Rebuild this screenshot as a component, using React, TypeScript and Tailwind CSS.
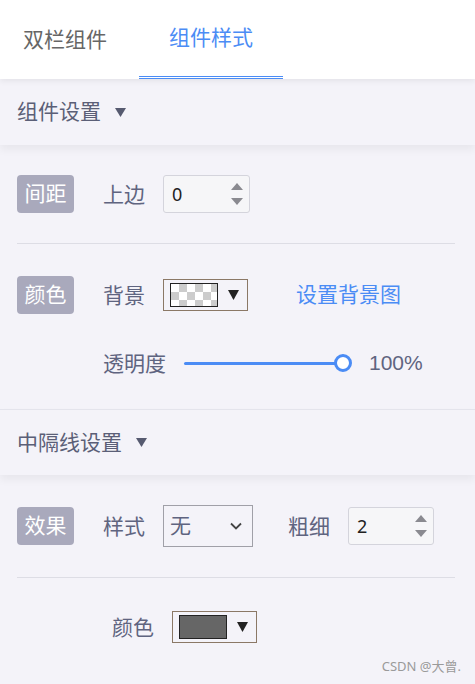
import React from 'react';

const font = "font-['Noto_Sans','Noto_Sans_CJK_SC',sans-serif]";

const Badge = ({ children }: { children: React.ReactNode }) => (
  <div className="flex h-[38px] w-[57px] items-center justify-center rounded-[4px] bg-[#a9a9bc] text-[21px] text-white">
    {children}
  </div>
);

const Label = ({ children, className = '' }: { children: React.ReactNode; className?: string }) => (
  <span className={`text-[21px] leading-none text-[#5f6480] ${className}`}>{children}</span>
);

const NumberInput = ({ value, width }: { value: string; width: string }) => (
  <div className={`flex h-[38px] ${width} items-center justify-between rounded-[3px] border border-[#d4d4dc] bg-[#f6f6f8] pl-[8px] pr-[6px]`}>
    <span className="text-[18px] text-[#222]">{value}</span>
    <div className="flex flex-col items-center gap-[8px]">
      <svg width="12" height="7" viewBox="0 0 12 7">
        <path d="M6 0L12 7H0Z" fill="#8a8a90" />
      </svg>
      <svg width="12" height="7" viewBox="0 0 12 7">
        <path d="M0 0H12L6 7Z" fill="#8a8a90" />
      </svg>
    </div>
  </div>
);

const ColorBox = ({ checker }: { checker?: boolean }) => (
  <div className="flex h-[32px] w-[85px] items-center gap-[10px] border border-[#8b7866] pl-[6px]">
    <div
      className={`h-[24px] w-[48px] border border-[#222] ${
        checker
          ? 'bg-[conic-gradient(#ccc_25%,#fff_0_50%,#ccc_0_75%,#fff_0)] bg-[length:16px_16px]'
          : 'bg-[#666]'
      }`}
    />
    <svg width="11" height="10" viewBox="0 0 11 10">
      <path d="M0 0H11L5.5 10Z" fill="#222" />
    </svg>
  </div>
);

const SectionHeader = ({ title, border }: { title: string; border?: boolean }) => (
  <div
    className={`relative z-10 flex h-[66px] items-center gap-[14px] bg-[#f4f3f9] px-[17px] shadow-[0_5px_8px_rgba(0,0,0,0.05)] ${
      border ? 'border-t border-[#e4e4ec]' : ''
    }`}
  >
    <span className="text-[21px] text-[#5b5f77]">{title}</span>
    <svg width="11" height="9" viewBox="0 0 11 9">
      <path d="M0 0H11L5.5 9Z" fill="#565a70" />
    </svg>
  </div>
);

const App = () => {
  return (
    <div className={`relative min-h-[684px] w-[475px] bg-[#f4f3f9] ${font}`}>
      {/* Tabs */}
      <div className="relative z-20 flex h-[79px] bg-white shadow-[0_2px_6px_rgba(0,0,0,0.07)]">
        <div className="flex w-[139px] items-center pl-[23px] text-[21px] text-[#666]">双栏组件</div>
        <div className="flex w-[144px] items-center justify-center border-b-[3px] border-double border-[#4b8cf5] pb-[1px] text-[21px] text-[#4b8cf5]">
          组件样式
        </div>
      </div>

      <SectionHeader title="组件设置" />

      <div className="px-[17px] pt-[30px] pb-[27px]">
        <div className="flex items-center">
          <Badge>间距</Badge>
          <Label className="ml-[29px]">上边</Label>
          <div className="ml-[18px]">
            <NumberInput value="0" width="w-[87px]" />
          </div>
        </div>

        <div className="mt-[30px] mb-[32px] mr-[3px] h-px bg-[#dddde5]" />

        <div className="flex items-center">
          <Badge>颜色</Badge>
          <Label className="ml-[29px]">背景</Label>
          <div className="ml-[18px]">
            <ColorBox checker />
          </div>
          <span className="ml-[48px] text-[21px] text-[#4b8cf5]">设置背景图</span>
        </div>

        <div className="mt-[30px] flex h-[38px] items-center">
          <Label className="ml-[86px]">透明度</Label>
          <div className="relative ml-[18px] flex h-[20px] w-[168px] items-center">
            <div className="h-[3px] w-[160px] rounded-full bg-[#4b8cf5]" />
            <div className="absolute right-0 h-[18px] w-[18px] rounded-full border-[3px] border-[#4b8cf5] bg-white" />
          </div>
          <span className="ml-[17px] font-['Liberation_Sans',sans-serif] text-[21px] text-[#5f6480]">100%</span>
        </div>
      </div>

      <SectionHeader title="中隔线设置" border />

      <div className="px-[17px] pt-[30px]">
        <div className="flex items-center">
          <Badge>效果</Badge>
          <Label className="ml-[29px]">样式</Label>
          <div className="ml-[18px] flex h-[42px] w-[90px] items-center justify-between border border-[#a0a0a8] pl-[6px] pr-[10px]">
            <span className="text-[21px] text-[#5f6480]">无</span>
            <svg width="12" height="8" viewBox="0 0 12 8">
              <path d="M1 1.5L6 6.5L11 1.5" fill="none" stroke="#444" strokeWidth="1.8" />
            </svg>
          </div>
          <Label className="ml-[35px]">粗细</Label>
          <div className="ml-[18px]">
            <NumberInput value="2" width="w-[86px]" />
          </div>
        </div>

        <div className="mt-[30px] mb-[33px] mr-[3px] h-px bg-[#dddde5]" />

        <div className="flex items-center">
          <Label className="ml-[95px]">颜色</Label>
          <div className="ml-[18px]">
            <ColorBox />
          </div>
        </div>

        <div className="-mr-[3px] mt-[14px] flex justify-end text-[13px] text-[#9a9a9a]">CSDN @大曾.</div>
      </div>
    </div>
  );
};

export default App;
